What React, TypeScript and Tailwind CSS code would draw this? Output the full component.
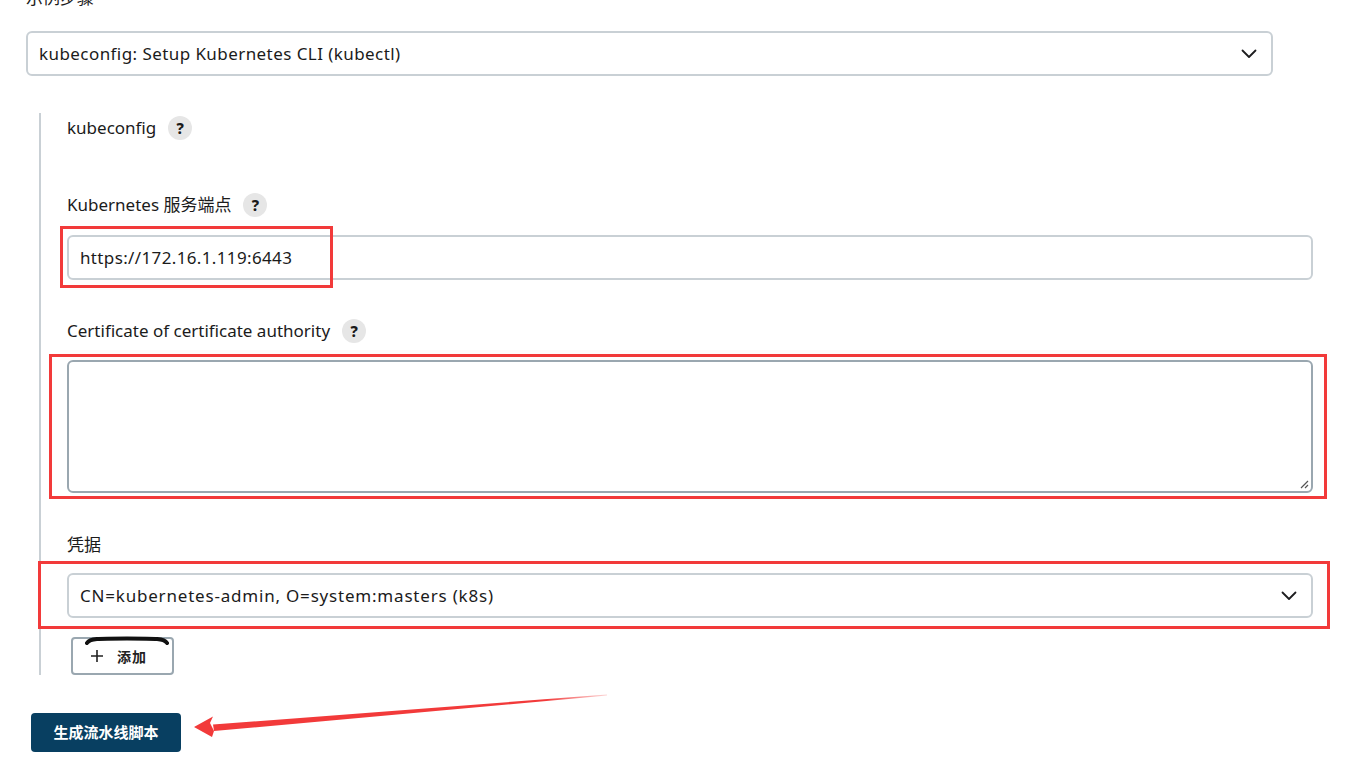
import React from "react";

const font = "font-['Noto_Sans','Noto_Sans_CJK_SC',sans-serif]";

const HelpIcon = () => (
  <span className="ml-[12px] inline-flex h-6 w-6 items-center justify-center rounded-full bg-[#e6e6e6] text-[15px] font-extrabold text-[#1a1a1a]">
    ?
  </span>
);

const Chevron = () => (
  <svg width="16" height="10" viewBox="0 0 16 10" fill="none">
    <path d="M1.5 1.5 8 8l6.5-6.5" stroke="#1d1d1f" strokeWidth="1.8" strokeLinecap="round" strokeLinejoin="round" />
  </svg>
);

const FieldLabel = ({ text, help = true }: { text: string; help?: boolean }) => (
  <div className="flex h-6 items-center text-[17px] text-[#1b1b1b]">
    <span>{text}</span>
    {help && <HelpIcon />}
  </div>
);

const SelectBox = ({ value, className, textClass }: { value: string; className: string; textClass: string }) => (
  <div
    className={`flex h-[45px] items-center justify-between rounded-[6px] border-2 border-[#c9d0d5] bg-white pl-[11px] pr-[14px] text-[17px] text-[#1b1b1b] ${className}`}
  >
    <span className={textClass}>{value}</span>
    <Chevron />
  </div>
);

export default function App() {
  return (
    <div className={`relative h-[760px] w-[1356px] overflow-hidden bg-white ${font}`}>
      {/* step selector */}
      <div className="-mt-[14px] h-6 pl-[26px] text-[17px] leading-6 text-[#1b1b1b]">示例步骤</div>
      <SelectBox
        value="kubeconfig: Setup Kubernetes CLI (kubectl)"
        className="ml-[26px] mt-[21px] w-[1247px]"
        textClass="tracking-[0.43px]"
      />

      {/* step config */}
      <div className="ml-[39px] mt-[37px] h-[562px] border-l-2 border-[#c9d0d5] pl-[26px] pt-[3px]">
        <FieldLabel text="kubeconfig" />

        <div className="mt-[53px]">
          <FieldLabel text="Kubernetes 服务端点" />
        </div>
        <div className="mt-[18px] flex h-[45px] w-[1246px] items-center rounded-[6px] border-2 border-[#c9d0d5] pl-[11px] text-[17px] tracking-[0.36px] text-[#1b1b1b]">
          https://172.16.1.119:6443
        </div>

        <div className="mt-[39px]">
          <FieldLabel text="Certificate of certificate authority" />
        </div>
        <div className="relative mt-[17px] h-[133px] w-[1246px] rounded-[6px] border-2 border-[#9aa7b0] bg-white">
          <svg className="absolute bottom-[2px] right-[2px]" width="10" height="10" viewBox="0 0 10 10">
            <path d="M9 2 2 9M9 6 6 9" stroke="#555" strokeWidth="1.2" />
          </svg>
        </div>

        <div className="mt-[40px]">
          <FieldLabel text="凭据" help={false} />
        </div>
        <SelectBox
          value="CN=kubernetes-admin, O=system:masters (k8s)"
          className="mt-4 w-[1246px]"
          textClass="tracking-[0.8px]"
        />

        <div className="relative ml-1 mt-[19px] flex h-[38px] w-[103px] items-center rounded-[4px] border-2 border-[#9aa7b0] bg-white pl-[17px] text-[14px] font-bold tracking-[1px] text-[#222]">
          <svg width="14" height="14" viewBox="0 0 14 14" className="mr-[13px]">
            <path d="M7 1v12M1 7h12" stroke="#222" strokeWidth="1.6" />
          </svg>
          添加
          <svg className="absolute -top-[4px] left-[12px]" width="84" height="10" viewBox="0 0 84 10">
            <path d="M2 8C5 3.5 12 3.5 42 3.5s37 0 40 4.5" stroke="#111" strokeWidth="4" fill="none" strokeLinecap="round" />
          </svg>
        </div>
      </div>

      <button className="ml-[31px] mt-[38px] flex h-[39px] w-[150px] items-center justify-center rounded-[4px] bg-[#083f61] text-[15px] font-bold text-white">
        生成流水线脚本
      </button>

      {/* annotations */}
      <div className="absolute left-[60px] top-[226px] h-[62px] w-[273px] border-[3px] border-[#f23a3a]" />
      <div className="absolute left-[49px] top-[354px] h-[145px] w-[1278px] border-[3px] border-[#f23a3a]" />
      <div className="absolute left-[38px] top-[561px] h-[68px] w-[1292px] border-[3px] border-[#f23a3a]" />
      <svg className="absolute left-0 top-0" width="1356" height="760" viewBox="0 0 1356 760">
        <defs>
          <linearGradient id="fade" x1="195" y1="727" x2="607" y2="695" gradientUnits="userSpaceOnUse">
            <stop offset="0" stopColor="#f23a3a" />
            <stop offset="0.85" stopColor="#f23a3a" />
            <stop offset="1" stopColor="#f23a3a" stopOpacity="0.2" />
          </linearGradient>
        </defs>
        <path d="M213 724.5 L607 694.5 L607 695.5 L214 731 Z" fill="url(#fade)" />
        <path d="M194 727 L213 716.5 L210 723 L214 731 L212 737 Z" fill="#f23a3a" />
      </svg>
    </div>
  );
}
